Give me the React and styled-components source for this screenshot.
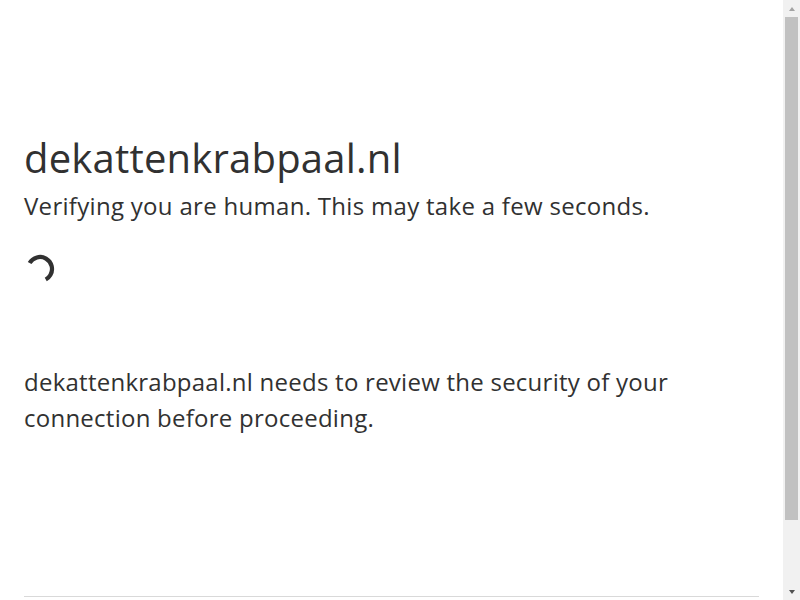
import React from "react";
import styled, { createGlobalStyle } from "styled-components";

const GlobalStyle = createGlobalStyle`
  html, body {
    margin: 0;
    padding: 0;
    background: #fff;
    overflow: hidden;
  }
  body {
    font-family: "Open Sans", "Noto Sans", "Liberation Sans", sans-serif;
    color: #313131;
  }
`;

const Viewport = styled.div`
  display: flex;
  height: 100vh;
`;

const Page = styled.div`
  flex: 1;
  min-width: 0;
  overflow: hidden;
`;

const Wrapper = styled.main`
  display: flex;
  flex-direction: column;
  margin: 128px auto 0;
  max-width: 960px;
  padding: 0 24px;
`;

const Title = styled.h1`
  margin: 0;
  font-size: 40px;
  line-height: 60px;
  font-weight: 500;
  letter-spacing: 0.2px;
`;

const Subtitle = styled.h2`
  margin: 0;
  font-size: 24px;
  line-height: 36px;
  font-weight: 400;
  letter-spacing: 0.3px;
`;

const Stage = styled.div`
  margin-top: 30px;
  padding-left: 1px;
  height: 30px;
  display: flex;
  align-items: center;
`;

const Message = styled.p`
  margin: 80px 0 0;
  font-size: 24px;
  line-height: 36px;
  font-weight: 400;
  letter-spacing: 0.25px;
`;

const Footer = styled.footer`
  margin: 160px auto 0;
  max-width: 960px;
  padding: 0 24px;
`;

const FooterInner = styled.div`
  border-top: 1px solid #d9d9d9;
  height: 78px;
`;

/* browser scrollbar strip on the right */
const ScrollBar = styled.div`
  width: 17px;
  flex: none;
  display: flex;
  flex-direction: column;
  background: #f1f1f1;
`;

const ArrowButton = styled.div`
  height: 17px;
  flex: none;
  display: flex;
  align-items: center;
  justify-content: center;
  padding-left: 1px;

  &::before {
    content: "";
    width: 0;
    height: 0;
    border-left: 3.5px solid transparent;
    border-right: 3.5px solid transparent;
    ${({ $dir }) =>
      $dir === "up"
        ? "border-bottom: 4px solid #a3a3a3;"
        : "border-top: 4px solid #505050;"}
  }
`;

const Track = styled.div`
  flex: 1;
  display: flex;
  flex-direction: column;
  padding: 0 2px 0 2px;
`;

const Thumb = styled.div`
  height: 503px;
  background: #c1c1c1;
`;

const Spinner = () => (
  <svg width="30" height="30" viewBox="0 0 30 30">
    <circle
      cx="15"
      cy="15"
      r="12"
      fill="none"
      stroke="#313131"
      strokeWidth="4.2"
      strokeDasharray="44 100"
      transform="rotate(-150 15 15)"
    />
  </svg>
);

export default function App() {
  return (
    <>
      <GlobalStyle />
      <Viewport>
        <Page>
          <Wrapper>
            <Title>dekattenkrabpaal.nl</Title>
            <Subtitle>Verifying you are human. This may take a few seconds.</Subtitle>
            <Stage>
              <Spinner />
            </Stage>
            <Message>
              dekattenkrabpaal.nl needs to review the security of your
              connection before proceeding.
            </Message>
          </Wrapper>
          <Footer>
            <FooterInner />
          </Footer>
        </Page>
        <ScrollBar>
          <ArrowButton $dir="up" />
          <Track>
            <Thumb />
          </Track>
          <ArrowButton $dir="down" />
        </ScrollBar>
      </Viewport>
    </>
  );
}
